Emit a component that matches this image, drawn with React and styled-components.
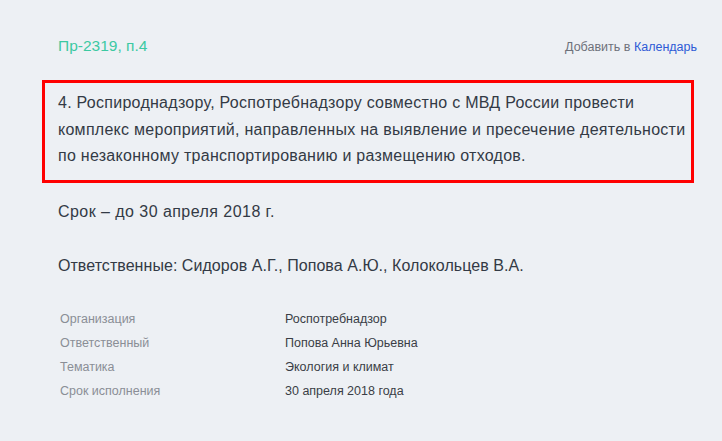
import styled, { createGlobalStyle } from "styled-components";

const Global = createGlobalStyle`
  html, body {
    margin: 0;
    padding: 0;
    background: #edf0f4;
  }
  body {
    font-family: "Liberation Sans", Arial, sans-serif;
    color: #333a45;
  }
`

const Page = styled.div`
  width: 722px;
  min-height: 441px;
  box-sizing: border-box;
  padding: 37px 28px 0 42px;
`

const Header = styled.div`
  display: flex;
  justify-content: space-between;
  align-items: baseline;
  padding-left: 16px;
`

const Code = styled.div`
  color: #3cc9a2;
  font-size: 15.5px;
`

const AddLink = styled.div`
  color: #6d717a;
  font-size: 12.5px;
  margin-right: -3px;
  a {
    color: #2e5bd6;
    text-decoration: none;
  }
`

const Highlight = styled.div`
  margin-top: 25px;
  border: 3px solid #ff0000;
  padding: 7px 10px 10px 13px;
  font-size: 16px;
  line-height: 26.5px;
  letter-spacing: 0.27px;
  color: #333a45;
  white-space: nowrap;
`

const Line = styled.div`
  padding-left: 16px;
  font-size: 16px;
  letter-spacing: ${p => p.$spacing}px;
  color: #333a45;
  margin-top: ${p => p.$top}px;
`

const Table = styled.div`
  display: grid;
  grid-template-columns: 225px 1fr;
  row-gap: 6px;
  margin-top: 35px;
  padding-left: 18px;
  font-size: 12.5px;
  line-height: 18px;
`

const Label = styled.div`
  color: #8a8e96;
`

const Value = styled.div`
  color: #3a3e46;
`

const rows = [
  ["Организация", "Роспотребнадзор"],
  ["Ответственный", "Попова Анна Юрьевна"],
  ["Тематика", "Экология и климат"],
  ["Срок исполнения", "30 апреля 2018 года"],
]

export default function App() {
  return (
    <>
      <Global />
      <Page>
        <Header>
          <Code>Пр-2319, п.4</Code>
          <AddLink>Добавить в <a href="#">Календарь</a></AddLink>
        </Header>
        <Highlight>
          4. Роспироднадзору, Роспотребнадзору совместно с МВД России провести<br />
          комплекс мероприятий, направленных на выявление и пресечение деятельности<br />
          по незаконному транспортированию и размещению отходов.
        </Highlight>
        <Line $top={20} $spacing={0.45}>Срок – до 30 апреля 2018 г.</Line>
        <Line $top={36} $spacing={0.05}>Ответственные: Сидоров А.Г., Попова А.Ю., Колокольцев В.А.</Line>
        <Table>
          {rows.map(([k, v]) => (
            <>
              <Label key={k}>{k}</Label>
              <Value key={k + "v"}>{v}</Value>
            </>
          ))}
        </Table>
      </Page>
    </>
  )
}
